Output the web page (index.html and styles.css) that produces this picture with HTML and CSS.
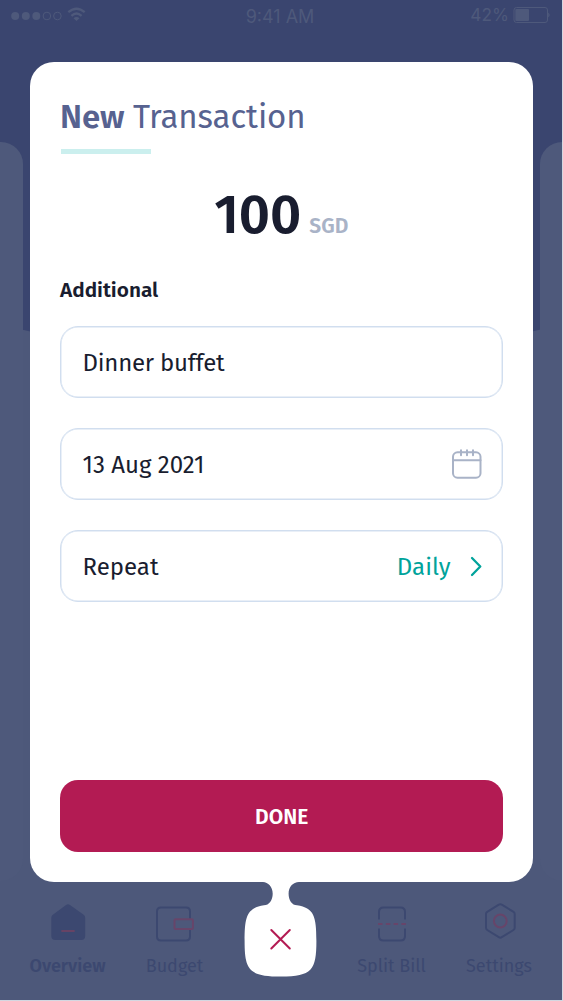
FILE: index.html
```
<!DOCTYPE html>
<html lang="en">
<head>
<meta charset="utf-8">
<title>New Transaction</title>
<link rel="stylesheet" href="styles.css">
</head>
<body>
<div class="screen">
  <div class="hero"></div>
  <div class="side-card side-card-left"></div>
  <div class="side-card side-card-right"></div>

  <header class="status">
    <svg class="signal" width="76" height="18" viewBox="0 0 76 18">
      <g fill="currentColor"><circle cx="5.2" cy="10" r="4"/><circle cx="15.8" cy="10" r="4"/><circle cx="26.3" cy="10" r="4"/></g>
      <g fill="none" stroke="currentColor"><circle cx="36.9" cy="10" r="3.8"/><circle cx="47.4" cy="10" r="3.8"/></g>
      <g fill="none" stroke="currentColor" stroke-width="2.3"><path d="M58.3 6.2Q66.5-.8 74.7 6.2"/><path d="M61.4 9.8Q66.5 5.2 71.6 9.8"/></g>
      <path fill="currentColor" d="M63.5 12.2Q66.5 9.7 69.5 12.2L66.5 15Z"/>
    </svg>
    <span class="time">9:41 AM</span>
    <span class="battery"><span class="percent">42%</span>
      <svg width="38" height="18" viewBox="0 0 38 18"><rect x="1" y="1.5" width="33.5" height="15" rx="2.5" fill="none" stroke="currentColor"/><rect x="2.3" y="3" width="13.7" height="12" rx="1" fill="currentColor"/><path d="M35.2 6.5Q38.2 9 35.2 11.5Z" fill="currentColor"/></svg>
    </span>
  </header>

  <main class="dialog">
    <h1 class="title"><b>New</b> Transaction</h1>
    <div class="accent"></div>
    <div class="amount"><span class="value">100</span><span class="currency">SGD</span></div>
    <h2 class="section">Additional</h2>
    <div class="fields">
      <div class="field"><span class="note">Dinner buffet</span></div>
      <div class="field"><span>13 Aug 2021</span>
        <svg class="calendar" width="32" height="32" viewBox="0 0 32 32" fill="none" stroke="#a9b3c7" stroke-width="2" stroke-linecap="round"><rect x="2" y="3.3" width="27.5" height="25.4" rx="4.5"/><path d="M2.5 11.3H29.5M10 1.3V6.3M16 1.3V6.3M22 1.3V6.3"/></svg>
      </div>
      <div class="field"><span>Repeat</span>
        <span class="choice"><span>Daily</span><svg width="14" height="22" viewBox="0 0 14 22" fill="none" stroke="currentColor" stroke-width="2.3" stroke-linecap="round" stroke-linejoin="round"><path d="M3 2L11.3 10.5L3 19"/></svg></span>
      </div>
    </div>
    <button class="done">DONE</button>
  </main>

  <nav class="tabs">
    <div class="tab active">
      <svg width="40" height="40" viewBox="0 0 40 40"><path d="M18 3Q20 1.6 22 3L36 13Q37.2 14 37.2 16V34Q37.2 38 33.2 38H7.3Q3.3 38 3.3 34V16Q3.3 14 4.5 13Z" fill="#3c4870"/><path d="M14 29H26" stroke="#674365" stroke-width="1.8" stroke-linecap="round"/></svg>
      <span>Overview</span>
    </div>
    <div class="tab">
      <svg width="40" height="40" viewBox="0 0 40 40" fill="none" stroke="#3c4870" stroke-width="2"><path d="M35 17V9.5Q35 5.5 31 5.5H6Q2 5.5 2 9.5V34.5Q2 38.5 6 38.5H31Q35 38.5 35 34.5V27"/><rect x="19.5" y="17.3" width="18.4" height="9.8" rx="1" stroke="#67456a"/></svg>
      <span class="budget">Budget</span>
    </div>
    <div></div>
    <div class="tab">
      <svg width="40" height="40" viewBox="0 0 40 40" fill="none" stroke="#3c4870" stroke-width="2"><path d="M7 17.5V10Q7 5.5 11.5 5.5H28.5Q33 5.5 33 10V17.5M7 26.5V34Q7 38.5 11.5 38.5H28.5Q33 38.5 33 34V26.5"/><path d="M6 22H34.2" stroke="#67456a" stroke-dasharray="4.5 3.3"/></svg>
      <span>Split Bill</span>
    </div>
    <div class="tab">
      <svg width="40" height="40" viewBox="0 0 40 40" fill="none" stroke="#3c4870" stroke-width="2" stroke-linejoin="round"><path d="M19.8 2.7Q21.3 1.7 22.8 2.7L34.5 9.8Q35.7 10.6 35.7 12V25.8Q35.7 27.3 34.5 28L22.8 35.2Q21.3 36.2 19.8 35.2L8.2 28Q7 27.3 7 25.8V12Q7 10.6 8.2 9.8Z"/><circle cx="21.3" cy="19" r="6.4" stroke="#67456a"/></svg>
      <span>Settings</span>
    </div>
  </nav>

  <svg class="close" width="74" height="97" viewBox="0 0 74 97">
    <path fill="#fff" d="M19 0V2C24 2 28.7 7 28.7 13.7C28.7 20 25 25.3 20 25.3C3 28 .6 36 .6 61C.6 90 5 96.5 37 96.5C68 96.5 72.4 90 72.4 61C72.4 36 70 28 53 25.3C48 25.3 44.6 20 44.6 13.7C44.6 7 49 2 55 2V0Z"/>
    <path d="M27.3 50L45.8 68.5M45.8 50L27.3 68.5" stroke="#b31b53" stroke-width="2" stroke-linecap="round"/>
  </svg>
</div>
</body>
</html>
```
FILE: styles.css
```
* { box-sizing: border-box; }
body { margin: 0; background: #d4d7e1; font-family: "Fira Sans", "Noto Sans", sans-serif; }
.screen { position: relative; width: 562px; height: 1000px; overflow: hidden; background: #4d587a; display: flex; flex-direction: column; justify-content: space-between; }
.hero { position: absolute; inset: 0 0 auto; height: 348px; background: #3a456f; border-radius: 0 0 50% 50% / 0 0 30px 30px; }
.side-card { position: absolute; top: 142px; width: 60px; height: 739px; background: #4e597b; border-radius: 22px; }
.side-card-left { left: -37px; }
.side-card-right { left: 540px; }
.status { position: relative; display: grid; grid-template-columns: 1fr auto 1fr; align-items: start; padding: 6px 11px 0 10px; color: #4e597b; font-family: Inter, sans-serif; font-size: 18px; line-height: 22px; }
.time { margin-left: -1px; }
.battery { display: flex; gap: 4px; justify-content: flex-end; }
.percent { margin-top: -2px; font-size: 17.3px; }
.dialog { position: absolute; left: 30px; top: 61.5px; width: 502.5px; height: 820.5px; padding: 30px; background: #fff; border-radius: 24px; display: flex; flex-direction: column; color: #191d2f; }
.title { margin: 0; height: 50px; line-height: 51px; font-size: 33px; letter-spacing: -.1px; font-weight: 400; color: #576290; white-space: nowrap; }
.title b { font-weight: 600; }
.accent { margin: 7.5px 0 0 .5px; width: 90px; height: 4.5px; background: #cbefee; }
.amount { display: flex; justify-content: center; align-items: baseline; gap: 8px; margin-top: 24.5px; height: 72px; line-height: 74px; }
.value { font-size: 54px; font-weight: 600; }
.currency { font-size: 21px; font-weight: 600; color: #a9b3c7; }
.section { margin: 25.5px 0 0; font-size: 20.8px; line-height: 30px; font-weight: 600; }
.fields { display: grid; gap: 30px; margin-top: 20px; }
.field { display: flex; align-items: center; justify-content: space-between; height: 72px; padding: 2px 19px 0 21.5px; border: 1px solid #d1deef; box-shadow: inset 0 0 0 .5px #d4e0f0; border-radius: 18px; font-size: 24px; }
.note { letter-spacing: -.22px; }
.choice { display: flex; align-items: center; gap: 18px; color: #00a39b; }
.done { margin-top: auto; height: 72px; padding: 2px 0 0 1px; border: 0; border-radius: 18px; background: #b31b53; color: #fff; font: 600 21px "Fira Sans", "Noto Sans", sans-serif; }
.tabs { position: relative; display: grid; grid-template-columns: 107px 107px 110px 107px 108px; padding: 20px 0 0 14px; height: 118px; color: #3c4870; }
.tab { display: flex; flex-direction: column; align-items: center; gap: 12px; font-size: 18px; line-height: 24px; white-space: nowrap; }
.active { font-weight: 600; }
.close { position: absolute; left: 244px; top: 880px; }
```
